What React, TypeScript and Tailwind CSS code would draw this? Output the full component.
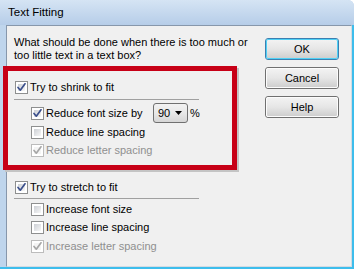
import type { ReactNode } from "react";

type CheckProps = {
  checked?: boolean;
  disabled?: boolean;
};

function CheckBox({ checked, disabled }: CheckProps) {
  return (
    <span
      className={
        "relative flex h-[13px] w-[13px] shrink-0 items-center justify-center border bg-white " +
        (disabled ? "border-[#bcbcbc]" : "border-[#8e8f8f]")
      }
    >
      <span
        className={
          "absolute inset-[2px] " +
          (disabled
            ? "bg-[#f4f4f4]"
            : "bg-gradient-to-br from-[#cdd0d5] to-[#f7f7f7]")
        }
      />
      {checked && (
        <svg viewBox="0 0 11 11" className="relative h-[11px] w-[11px]">
          <path
            d="M2 5.5 L4.3 8.2 L9 1.8"
            fill="none"
            stroke={disabled ? "#a6a6a6" : "#3b4f8c"}
            strokeWidth="1.7"
            strokeLinecap="round"
            strokeLinejoin="round"
          />
        </svg>
      )}
    </span>
  );
}

function Option({
  label,
  checked,
  disabled,
  className,
  children,
}: CheckProps & { label: string; className?: string; children?: ReactNode }) {
  return (
    <div className={"flex items-center whitespace-nowrap " + (className ?? "h-[18px]")}>
      <CheckBox checked={checked} disabled={disabled} />
      <span
        className={"ml-[2px] " + (disabled ? "text-[#8f8f8f]" : "text-black")}
      >
        {label}
      </span>
      {children}
    </div>
  );
}

function Button({ label, primary }: { label: string; primary?: boolean }) {
  return (
    <button
      type="button"
      className={
        "relative h-[22px] w-[74px] rounded-[3px] border text-black " +
        (primary ? "border-[#3c7fb1]" : "border-[#707070]")
      }
    >
      <span
        className={
          "absolute inset-0 rounded-[2px] border bg-gradient-to-b from-[#f2f2f2] via-[#e6e6e6] to-[#cfcfcf] " +
          (primary ? "border-[#4fd0f5]" : "border-[#fcfcfc]")
        }
      />
      <span className="relative">{label}</span>
    </button>
  );
}

export default function App() {
  return (
    <div
      className="relative flex h-[269px] w-[354px] flex-col overflow-hidden rounded-tr-[6px] bg-[#bfd5ec] text-[11px] leading-[13px] text-black"
      style={{ fontFamily: '"Liberation Sans", Arial, sans-serif' }}
    >
      {/* title bar */}
      <div className="flex h-[25px] shrink-0 items-center bg-gradient-to-b from-[#d5e4f4] to-[#b6cde8] pl-[8px]">
        <span className="text-[11.5px]">Text Fitting</span>
      </div>

      <div className="flex flex-1 pb-[2px] pl-[6px] pr-[2px]">
        <div className="flex flex-1 border border-r-[#d4dbe2] border-l-[#8797ab] border-t-[#8797ab] border-b-[#d4dbe2] bg-[#f0f0f0]">
          {/* left column */}
          <div className="min-w-0 flex-1">
            <p className="ml-[7px] mt-[10px] whitespace-nowrap">
              What should be done when there is too much or
              <br />
              too little text in a text box?
            </p>

            <div className="mt-[17px]">
              <div className="ml-[8px] flex h-[16px] items-center whitespace-nowrap">
                <CheckBox checked />
                <span className="ml-[2px]">Try to shrink to fit</span>
              </div>
              <div className="ml-[7px] mt-[4px] h-px w-[185px] bg-[#a0a0a0]" />
              <div className="ml-[24px] mt-[3px]">
                <div className="flex h-[20px] items-center whitespace-nowrap">
                  <CheckBox checked />
                  <span className="ml-[2px] w-[107px]">Reduce font size by</span>
                  <div className="relative flex h-[20px] w-[35px] items-center rounded-[3px] border border-[#707070] bg-gradient-to-b from-[#f2f2f2] via-[#e8e8e8] to-[#d6d6d6] pl-[4px]">
                    <span>90</span>
                    <svg
                      viewBox="0 0 7 4"
                      className="absolute right-[5px] top-[7px] h-[4px] w-[7px]"
                    >
                      <path d="M0 0 H7 L3.5 4 Z" fill="#000" />
                    </svg>
                  </div>
                  <span className="ml-[2px]">%</span>
                </div>
                <Option label="Reduce line spacing" />
                <Option label="Reduce letter spacing" checked disabled />
              </div>
            </div>

            <div className="mt-[20px]">
              <div className="ml-[8px] flex h-[16px] items-center whitespace-nowrap">
                <CheckBox checked />
                <span className="ml-[2px]">Try to stretch to fit</span>
              </div>
              <div className="ml-[7px] mt-[3px] h-px w-[185px] bg-[#a0a0a0]" />
              <div className="ml-[24px] mt-[1px]">
                <Option label="Increase font size" />
                <Option label="Increase line spacing" className="h-[19px]" />
                <Option label="Increase letter spacing" checked disabled />
              </div>
            </div>
          </div>

          {/* buttons */}
          <div className="mr-[12px] mt-[12px] flex flex-col gap-[7px]">
            <Button label="OK" primary />
            <Button label="Cancel" />
            <Button label="Help" />
          </div>
        </div>
      </div>

      {/* aero glow on right / bottom edge */}
      <div className="pointer-events-none absolute bottom-0 right-0 top-[25px] w-[2px] bg-[#3dbdec]" />
      <div className="pointer-events-none absolute bottom-0 left-0 right-0 h-[2px] bg-[#3dbdec]" />

      {/* red annotation box */}
      <div className="pointer-events-none absolute left-[3px] top-[66px] h-[104px] w-[234px] border-[5px] border-[#c70016] shadow-[2px_2px_0_#c4c4c4]" />
    </div>
  );
}
